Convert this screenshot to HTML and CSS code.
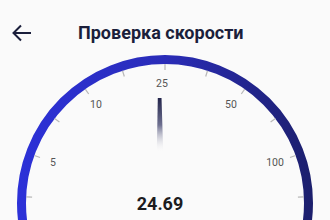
FILE: index.html
```html
<!DOCTYPE html>
<html lang="ru">
<head>
<meta charset="utf-8">
<link rel="stylesheet" href="styles.css">
</head>
<body>
<div class="screen">
  <header class="topbar">
    <svg class="back" width="20" height="18" viewBox="0 0 20 18" aria-hidden="true">
      <path d="M1.5 9H19M9 1.5L1.5 9L9 16.5" fill="none" stroke="#1b1f3b" stroke-width="2" stroke-linecap="butt" stroke-linejoin="miter"/>
    </svg>
    <h1 class="title">Проверка скорости</h1>
  </header>
  <svg class="gauge" width="330" height="170" viewBox="0 50 330 170">
    <defs>
      <linearGradient id="ring" gradientUnits="userSpaceOnUse" x1="17" y1="0" x2="313" y2="0">
        <stop offset="0" stop-color="#2c31d8"/>
        <stop offset="0.5" stop-color="#2a2cb8"/>
        <stop offset="1" stop-color="#1c1f6c"/>
      </linearGradient>
      <linearGradient id="needle" x1="0" y1="0" x2="0" y2="1">
        <stop offset="0" stop-color="#22244a"/>
        <stop offset="0.5" stop-color="#6e7090"/>
        <stop offset="1" stop-color="#fafafa" stop-opacity="0"/>
      </linearGradient>
    </defs>
    <circle cx="165" cy="203" r="143.5" fill="none" stroke="url(#ring)" stroke-width="9"/>
    <g class="ticks" stroke="#b8b8b8" stroke-width="1.2">
      <line x1="165" y1="64" x2="165" y2="70"/>
      <line x1="122.5" y1="70.8" x2="124.3" y2="76.5"/>
      <line x1="207.5" y1="70.8" x2="205.7" y2="76.5"/>
      <line x1="85.3" y1="89.1" x2="88.7" y2="94"/>
      <line x1="244.7" y1="89.1" x2="241.3" y2="94"/>
      <line x1="54.6" y1="118.4" x2="59.4" y2="122"/>
      <line x1="275.4" y1="118.4" x2="270.6" y2="122"/>
      <line x1="34.4" y1="155.5" x2="40" y2="157.5"/>
      <line x1="295.6" y1="155.5" x2="290" y2="157.5"/>
      <line x1="26.1" y1="196.9" x2="32.1" y2="197.2"/>
      <line x1="303.9" y1="196.9" x2="297.9" y2="197.2"/>
    </g>
    <g class="labels">
      <text x="53" y="162">5</text>
      <text x="96" y="104.5">10</text>
      <text x="162" y="83">25</text>
      <text x="231" y="104.5">50</text>
      <text x="275" y="162">100</text>
    </g>
    <polygon points="157.8,98 161.5,98 163.2,152 156.8,152" fill="url(#needle)"/>
    <text class="value" x="160" y="210">24.69</text>
  </svg>
</div>
</body>
</html>
```

FILE: styles.css
```css
html, body {
  margin: 0;
  padding: 0;
  background: #fafafa;
}
.screen {
  width: 330px;
  height: 220px;
  overflow: hidden;
  background: #fafafa;
}
.topbar {
  box-sizing: border-box;
  height: 50px;
  padding: 15px 12px 0 12px;
  display: flex;
  align-items: flex-start;
}
.back {
  display: block;
  margin-top: 9px;
  flex: none;
}
.title {
  margin: 6.5px 0 0 46px;
  font-family: Roboto, "Noto Sans", sans-serif;
  font-weight: 700;
  font-size: 18px;
  line-height: 22px;
  color: #1b1f3b;
  white-space: nowrap;
}
.gauge {
  display: block;
}
.labels text {
  font-family: Roboto, "Noto Sans", sans-serif;
  font-size: 10.5px;
  fill: #555555;
  text-anchor: middle;
  dominant-baseline: central;
}
.value {
  font-family: Roboto, "Noto Sans", sans-serif;
  font-weight: 700;
  font-size: 18px;
  fill: #1c1c1e;
  text-anchor: middle;
}
```
